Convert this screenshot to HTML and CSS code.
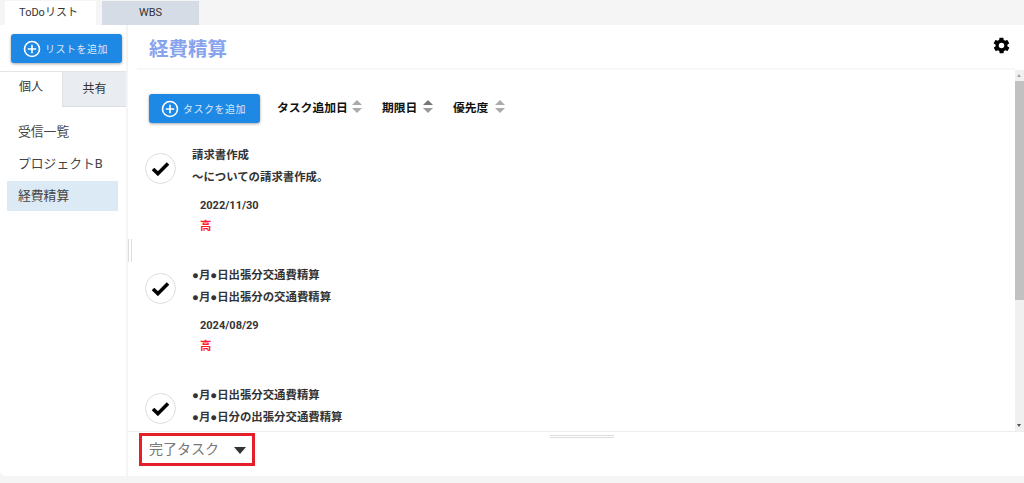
FILE: index.html
```html
<!DOCTYPE html>
<html lang="ja">
<head>
<meta charset="utf-8">
<title>ToDoリスト</title>
<link rel="stylesheet" href="styles.css">
</head>
<body>
<nav class="apptabs">
  <div class="apptab active">ToDoリスト</div>
  <div class="apptab">WBS</div>
</nav>
<div class="panel">
  <aside class="sidebar">
    <div class="addwrap">
      <button class="btn">
        <svg class="plus" viewBox="0 0 18 18"><circle cx="9" cy="9" r="7.5"/><path d="M9 4.8v8.4M4.8 9h8.4"/></svg>リストを追加
      </button>
    </div>
    <div class="scope">
      <div class="scopetab on">個人</div>
      <div class="scopetab">共有</div>
    </div>
    <ul class="lists">
      <li>受信一覧</li>
      <li>プロジェクトB</li>
      <li class="sel">経費精算</li>
    </ul>
    <div class="vhandle"></div>
  </aside>
  <main class="main">
    <header class="head">
      <h1>経費精算</h1>
      <svg class="gear" viewBox="0 0 24 24"><path d="M19.4 13a7.6 7.6 0 0 0 0-2l2.1-1.6a.5.5 0 0 0 .1-.6l-2-3.5a.5.5 0 0 0-.6-.2l-2.5 1a7.3 7.3 0 0 0-1.7-1l-.4-2.6a.5.5 0 0 0-.5-.4h-4a.5.5 0 0 0-.5.4l-.4 2.6a7.7 7.7 0 0 0-1.7 1l-2.5-1a.5.5 0 0 0-.6.2l-2 3.5a.5.5 0 0 0 .1.6L4.6 11a7.6 7.6 0 0 0 0 2l-2.1 1.6a.5.5 0 0 0-.1.6l2 3.5c.1.2.4.3.6.2l2.5-1c.5.4 1.1.7 1.7 1l.4 2.6c0 .2.3.4.5.4h4c.2 0 .5-.2.5-.4l.4-2.6a7.7 7.7 0 0 0 1.7-1l2.5 1c.2.1.5 0 .6-.2l2-3.5a.5.5 0 0 0-.1-.6zM12 15.5a3.5 3.5 0 1 1 0-7 3.5 3.5 0 0 1 0 7z"/></svg>
    </header>
    <div class="content">
      <div class="scroll">
        <div class="toolbar">
          <button class="btn task">
            <svg class="plus" viewBox="0 0 18 18"><circle cx="9" cy="9" r="7.5"/><path d="M9 4.8v8.4M4.8 9h8.4"/></svg>タスクを追加
          </button>
          <span class="sort s1">タスク追加日<i class="arrows"></i></span>
          <span class="sort s2">期限日<i class="arrows"></i></span>
          <span class="sort s3">優先度<i class="arrows"></i></span>
        </div>
        <article class="task-item">
          <span class="check"><svg viewBox="0 0 20 16"><path d="M2 8.5l5.2 5L18 2.6"/></svg></span>
          <div class="body">
            <div class="line">請求書作成</div>
            <div class="line">〜についての請求書作成。</div>
            <div class="date">2022/11/30</div>
            <div class="prio">高</div>
          </div>
        </article>
        <article class="task-item">
          <span class="check"><svg viewBox="0 0 20 16"><path d="M2 8.5l5.2 5L18 2.6"/></svg></span>
          <div class="body">
            <div class="line">●月●日出張分交通費精算</div>
            <div class="line">●月●日出張分の交通費精算</div>
            <div class="date">2024/08/29</div>
            <div class="prio">高</div>
          </div>
        </article>
        <article class="task-item">
          <span class="check"><svg viewBox="0 0 20 16"><path d="M2 8.5l5.2 5L18 2.6"/></svg></span>
          <div class="body">
            <div class="line">●月●日出張分交通費精算</div>
            <div class="line">●月●日分の出張分交通費精算</div>
          </div>
        </article>
      </div>
      <div class="scrollbar">
        <span class="up"></span>
        <span class="thumb"></span>
        <span class="down"></span>
      </div>
    </div>
    <footer class="foot">
      <div class="hhandle"></div>
      <div class="done">完了タスク<i class="caret"></i></div>
    </footer>
  </main>
</div>
</body>
</html>
```
FILE: styles.css
```css
* { box-sizing: border-box; }
html, body { height: 100%; }
body {
  margin: 0;
  height: 483px;
  overflow: hidden;
  background: #f5f5f5;
  color: #333;
  font-family: Roboto, "Noto Sans CJK JP", sans-serif;
  display: flex;
  flex-direction: column;
}
.apptabs { height: 25px; display: flex; padding: 1px 0 0 5px; gap: 6px; flex: none; }
.apptab {
  width: 91px;
  padding-right: 4px;
  font-size: 11px;
  line-height: 24px;
  text-align: center;
  color: #333;
  background: #fff;
}
.apptab + .apptab { width: 97px; padding-right: 0; background: #d6dce5; }
.panel {
  height: 451px;
  flex: none;
  display: flex;
  background: #fff;
  border-bottom-left-radius: 6px;
}
.sidebar {
  position: relative;
  width: 128px;
  flex: none;
  padding-left: 5px;
  border-right: 2px solid #f5f5f5;
}
.addwrap { padding: 9px 0 8px 6px; }
.btn {
  display: flex;
  align-items: center;
  width: 111px;
  height: 29px;
  padding: 0 0 0 12px;
  border: 0;
  border-radius: 3px;
  background: #1e88e5;
  color: #dbe9f7;
  font: 10px Roboto, "Noto Sans CJK JP", sans-serif;
  letter-spacing: .5px;
  box-shadow: 0 1px 3px rgba(0,0,0,.35);
}
.plus { width: 18px; height: 18px; margin-right: 4px; fill: none; stroke: #fff; stroke-width: 1.6; flex: none; }
.scope { display: flex; margin-left: -5px; height: 36px; border-top: 1px solid #e4e4e4; }
.scopetab { width: 62px; padding-top: 5px; font-size: 12px; text-align: center; color: #333; line-height: 20px; }
.scopetab + .scopetab { flex: 1; padding-top: 7px; background: #e9ecf0; border-left: 1px solid #e0e0e0; border-bottom: 1px solid #ddd; }
.lists { list-style: none; margin: 10px 0 0; padding: 0 0 0 2px; width: 113px; }
.lists li { height: 30px; margin-bottom: 2px; padding-left: 11px; font-size: 12.8px; line-height: 30px; color: #444; }
.lists li.sel { background: #dceaf5; }
.vhandle { position: absolute; right: -6px; top: 214px; width: 4px; height: 23px; background: #fff; border-left: 1px solid #ddd; border-right: 1px solid #ddd; }
.main { flex: 1; min-width: 0; display: flex; flex-direction: column; }
.head { height: 45px; flex: none; display: flex; align-items: center; justify-content: space-between; margin: 0 9px; padding: 2px 4px 0 12px; border-bottom: 2px solid #f7f7f7; }
h1 { margin: 0; font-size: 19.5px; font-weight: 700; color: #87a3ee; }
.gear { width: 19px; height: 19px; fill: #000; margin-top: -4px; }
.content { flex: 1; min-height: 0; display: flex; border-bottom: 1px solid #eee; }
.scroll { flex: 1; min-width: 0; overflow: hidden; padding: 24px 0 0 21px; }
.toolbar { display: flex; align-items: center; height: 29px; font-size: 11.8px; font-weight: 700; color: #111; }
.btn.task { margin-right: 17px; }
.sort { display: flex; align-items: center; margin-top: -5px; }
.s1 { width: 105px; }
.s2 { width: 71px; }
.arrows { position: relative; width: 10px; height: 13px; margin-left: 5px; display: block; }
.s1 .arrows { margin-left: 4px; }
.s2 .arrows { margin-left: 5.5px; }
.s3 .arrows { margin-left: 6.5px; }
.arrows::before, .arrows::after { content: ""; position: absolute; left: 0; border-left: 5px solid transparent; border-right: 5px solid transparent; }
.arrows::before { top: 0; border-bottom: 5px solid #aaa; }
.arrows::after { bottom: 0; border-top: 5px solid #aaa; }
.s2 .arrows::before { border-bottom-color: #777; }
.s2 .arrows::after { border-top-color: #999; }
.task-item { display: flex; height: 120px; padding-top: 22px; margin-left: -3px; position: relative; }
.check {
  width: 31px; height: 31px; flex: none; margin: 8px 0 0 -1px;
  border: 1px solid #ddd; border-radius: 50%;
  display: flex; align-items: center; justify-content: center;
}
.check svg { width: 19px; height: 15px; fill: none; stroke: #000; stroke-width: 3.8; }
.body { margin-left: 16px; font-size: 11.4px; font-weight: 700; color: #333; }
.line { height: 21px; line-height: 21px; white-space: nowrap; font-family: Roboto, "Liberation Sans", "Noto Sans CJK JP", sans-serif; }
.line + .line { height: 22px; line-height: 23px; }
.date { margin: 7px 0 0 8px; height: 21px; line-height: 21px; font-size: 11px; }
.prio { margin-left: 8px; line-height: 21px; color: #ff1a2e; }
.scrollbar { position: relative; width: 9px; flex: none; background: #f0f0f0; }
.thumb { position: absolute; left: 0; right: 0; top: 11px; height: 219px; background: #c1c1c1; }
.up, .down { position: absolute; left: 2px; border-left: 2.5px solid transparent; border-right: 2.5px solid transparent; }
.up { top: 4px; border-bottom: 3px solid #a3a3a3; }
.down { bottom: 4px; border-top: 3px solid #505050; }
.foot { height: 44px; flex: none; position: relative; padding: 1px 0 0 11px; }
.hhandle { position: absolute; left: 422px; top: 3px; width: 64px; height: 3px; border-top: 1px solid #ddd; border-bottom: 1px solid #ddd; }
.done {
  display: flex; align-items: center;
  width: 116px; height: 33px;
  padding: 0 0 3px 7px;
  border: 3px solid #e3202a;
  font-size: 14px;
  color: #777;
}
.caret { margin: 5px 0 0 15px; border-left: 6.5px solid transparent; border-right: 6.5px solid transparent; border-top: 7px solid #333; }
```
